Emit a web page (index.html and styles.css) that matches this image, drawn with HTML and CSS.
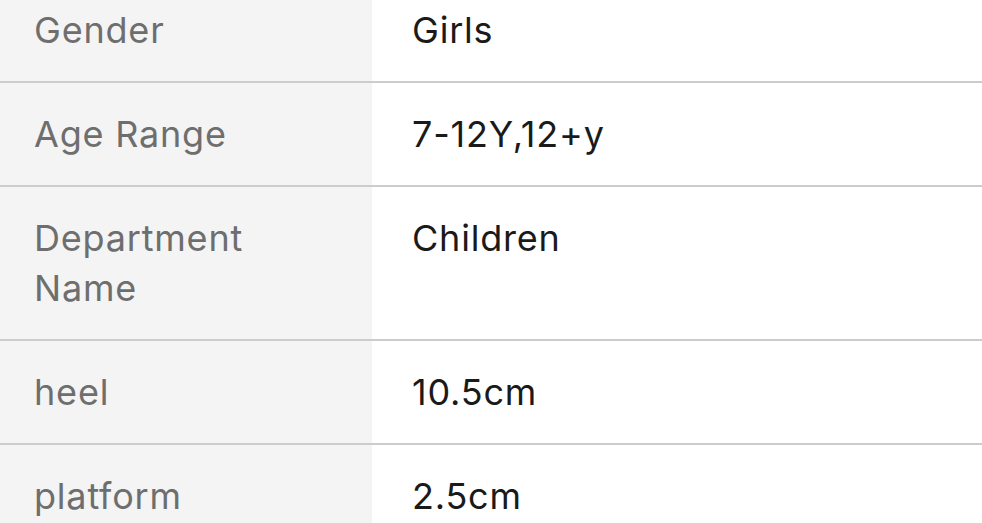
FILE: index.html
```html
<!DOCTYPE html>
<html lang="en">
<head>
<meta charset="utf-8">
<title>Specifications</title>
<link rel="stylesheet" href="styles.css">
</head>
<body>
<div class="specs">
  <div class="row">
    <div class="label">Gender</div>
    <div class="value">Girls</div>
  </div>
  <div class="row">
    <div class="label">Age Range</div>
    <div class="value">7-12Y,12+y</div>
  </div>
  <div class="row">
    <div class="label">Department<br>Name</div>
    <div class="value">Children</div>
  </div>
  <div class="row">
    <div class="label">heel</div>
    <div class="value">10.5cm</div>
  </div>
  <div class="row">
    <div class="label">platform</div>
    <div class="value">2.5cm</div>
  </div>
</div>
</body>
</html>
```
FILE: styles.css
```css
html, body {
  margin: 0;
  padding: 0;
  background: #ffffff;
  overflow: hidden;
}
.specs {
  margin-top: -21px;
  font-family: Inter, "Noto Sans", sans-serif;
  font-size: 36px;
  line-height: 50px;
  letter-spacing: 0.8px;
}
.row {
  display: grid;
  grid-template-columns: 372px 1fr;
  border-bottom: 2px solid #cccccc;
}
.label {
  background: #f4f4f4;
  color: #6e6e6e;
  padding: 26px 20px 26px 34px;
}
.value {
  color: #1a1a1a;
  padding: 26px 20px 26px 40px;
}
```
